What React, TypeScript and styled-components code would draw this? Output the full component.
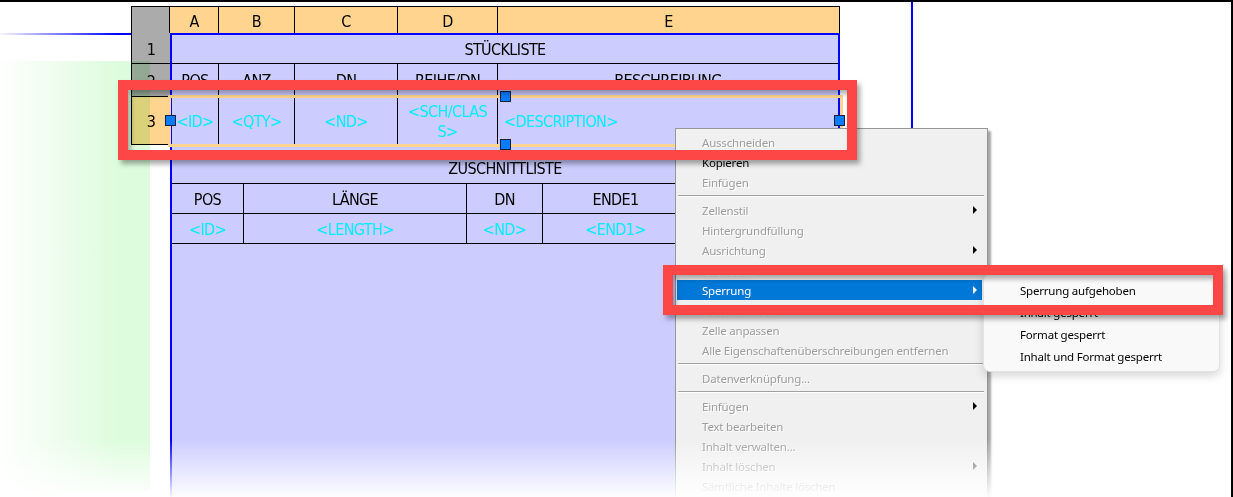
import React from "react";
import styled, { createGlobalStyle } from "styled-components";

const GlobalStyle = createGlobalStyle`
  html, body { margin: 0; padding: 0; background: #fff; }
  body { font-family: "Noto Sans", "DejaVu Sans", sans-serif; }
  *, *::before, *::after { box-sizing: border-box; }
`;

const LAVENDER = "#ccccff";
const ORANGE = "#fed48e";
const HEADER_GRAY = "#ababab";
const CAD_BLUE = "#0000ff";
const CYAN = "#00eeff";
const MARKUP_RED = "#fd4646";

const Screen = styled.div`
  position: relative;
  width: 1233px;
  height: 497px;
  overflow: hidden;
  background: #fff;
  border-top: 2px solid #000;
  border-right: 2px solid #000;
  display: flex;
`;

const ViewMargin = styled.div`
  width: 131px;
  flex: none;
  padding-top: 4px;
`;

const ViewEdge = styled.div`
  height: 29px;
  border-bottom: 2px solid ${CAD_BLUE};
`;

const Sheet = styled.div`
  width: 709px;
  flex: none;
  margin-top: 4px;
  display: flex;
  flex-direction: column;
  font-family: "DejaVu Sans Condensed", "DejaVu Sans", sans-serif;
  font-size: 16px;
  letter-spacing: -0.6px;
  color: #000;
`;

const ColumnHeaderRow = styled.div`
  display: grid;
  grid-template-columns: 39px 49px 76px 103px 100px 342px;
  height: 27px;
  flex: none;
`;

const ColumnHeader = styled.div<{ $corner?: boolean }>`
  background: ${({ $corner }) => ($corner ? HEADER_GRAY : ORANGE)};
  border-top: 1px solid #000;
  border-right: 1px solid #000;
  border-left: ${({ $corner }) => ($corner ? "1px solid #000" : "none")};
  display: flex;
  align-items: center;
  justify-content: center;
  padding-top: 3px;
`;

const SheetBody = styled.div`
  flex: 1;
  display: flex;
`;

const RowHeaderColumn = styled.div`
  width: 39px;
  flex: none;
  display: flex;
  flex-direction: column;
`;

const RowHeader = styled.div<{ $h: number; $selected?: boolean }>`
  height: ${({ $h }) => $h}px;
  flex: none;
  background: ${({ $selected }) => ($selected ? ORANGE : HEADER_GRAY)};
  border-left: 1px solid #000;
  border-bottom: 1px solid #000;
  display: flex;
  align-items: center;
  justify-content: center;
  padding-top: 2px;
`;

const DataArea = styled.div`
  width: 670px;
  flex: none;
  display: flex;
  flex-direction: column;
  background: ${LAVENDER};
  border: 2px solid ${CAD_BLUE};
  border-bottom: none;
`;

const BomGrid = styled.div`
  display: grid;
  grid-template-columns: 47px 76px 103px 100px 340px;
  grid-template-rows: 29px 33px 48px;
`;

const CutGrid = styled.div`
  display: grid;
  grid-template-columns: 72px 223px 76px 146px 149px;
  grid-template-rows: 31px 30px 30px;
  margin-top: 8px;
`;

const Cell = styled.div<{ $title?: boolean; $last?: boolean; $field?: boolean; $left?: boolean }>`
  grid-column: ${({ $title }) => ($title ? "1 / -1" : "auto")};
  border-bottom: 1px solid #000;
  border-right: ${({ $last, $title }) => ($last || $title ? "none" : "1px solid #000")};
  display: flex;
  align-items: center;
  justify-content: ${({ $left }) => ($left ? "flex-start" : "center")};
  padding: ${({ $left }) => ($left ? "2px 0 0 6px" : "2px 0 0")};
  color: ${({ $field }) => ($field ? CYAN : "#000")};
  text-align: center;
  line-height: 20px;
  white-space: nowrap;
`;

const ViewGap = styled.div`
  width: 71px;
  flex: none;
`;

const ViewportEdge = styled.div`
  width: 2px;
  flex: none;
  background: ${CAD_BLUE};
`;

const Workspace = styled.div`
  flex: 1;
`;

/* overlays */

const GreenPanel = styled.div`
  position: absolute;
  left: 0;
  top: 59px;
  width: 150px;
  height: 430px;
  background: #ddfcdd;
  mix-blend-mode: multiply;
`;

const SelectionFrame = styled.div`
  position: absolute;
  left: 168px;
  top: 93px;
  width: 675px;
  height: 52px;
  border: 3px solid ${ORANGE};
`;

const Grip = styled.div<{ $x: number; $y: number }>`
  position: absolute;
  left: ${({ $x }) => $x - 5}px;
  top: ${({ $y }) => $y - 7}px;
  width: 11px;
  height: 11px;
  background: #0a7cff;
  border: 1px solid #1c2040;
`;

const ContextMenu = styled.div`
  position: absolute;
  left: 675px;
  top: 126px;
  width: 313px;
  height: 390px;
  background: #f0f0f0;
  border: 1px solid #979797;
  padding: 3px 5px 0 1px;
  box-shadow: 3px 3px 2px rgba(0, 0, 0, 0.35);
  font-family: "Noto Sans", "Open Sans", sans-serif;
  font-size: 11.5px;
  letter-spacing: -0.2px;
`;

const MenuItem = styled.div<{ $disabled?: boolean; $active?: boolean }>`
  position: relative;
  height: 20px;
  display: flex;
  align-items: center;
  padding-left: 25px;
  background: ${({ $active }) => ($active ? "#0078d7" : "transparent")};
  color: ${({ $active, $disabled }) => ($active ? "#fff" : $disabled ? "#9d9d9d" : "#000")};
  text-shadow: ${({ $disabled }) => ($disabled ? "1px 1px 0 #ffffff" : "none")};
`;

const SubArrow = styled.span<{ $light?: boolean; $dim?: boolean }>`
  position: absolute;
  right: 5px;
  top: 6px;
  width: 0;
  height: 0;
  border-top: 4px solid transparent;
  border-bottom: 4px solid transparent;
  border-left: 4px solid ${({ $light, $dim }) => ($light ? "#fff" : $dim ? "#6a6a6a" : "#000")};
`;

const MenuSeparator = styled.div`
  height: 8px;
  display: flex;
  align-items: center;
  &::before {
    content: "";
    flex: 1;
    margin: 0 -2px 0 1px;
    border-top: 1px solid #a0a0a0;
    border-bottom: 1px solid #ffffff;
  }
`;

const SubMenu = styled.div`
  position: absolute;
  left: 983px;
  top: 271px;
  width: 237px;
  padding: 5px 0 4px;
  background: #f9f9f9;
  border: 1px solid #e3e3e3;
  border-radius: 7px;
  box-shadow: 0 4px 10px rgba(0, 0, 0, 0.16);
  font-family: "Noto Sans", "Open Sans", sans-serif;
  font-size: 11.5px;
  letter-spacing: -0.2px;
  color: #000;
`;

const SubMenuItem = styled.div`
  height: 22px;
  display: flex;
  align-items: center;
  padding-left: 36px;
`;

const Markup = styled.div<{ $x: number; $y: number; $w: number; $h: number }>`
  position: absolute;
  left: ${({ $x }) => $x}px;
  top: ${({ $y }) => $y}px;
  width: ${({ $w }) => $w}px;
  height: ${({ $h }) => $h}px;
  border: 10px solid ${MARKUP_RED};
  box-shadow: 3px 4px 5px rgba(0, 0, 0, 0.35), inset 3px 4px 5px rgba(0, 0, 0, 0.3);
`;

const LeftFade = styled.div`
  position: absolute;
  left: 0;
  top: 0;
  bottom: 0;
  width: 118px;
  background: linear-gradient(90deg, rgba(255, 255, 255, 0.97), rgba(255, 255, 255, 0));
  pointer-events: none;
`;

const BottomFade = styled.div`
  position: absolute;
  left: 0;
  right: 0;
  bottom: 0;
  height: 58px;
  background: linear-gradient(180deg, rgba(255, 255, 255, 0), rgba(255, 255, 255, 0.97));
  pointer-events: none;
`;

const bomHeads = ["POS", "ANZ", "DN", "REIHE/DN", "BESCHREIBUNG"];
const cutHeads = ["POS", "LÄNGE", "DN", "ENDE1", ""];
const cutFields = ["<ID>", "<LENGTH>", "<ND>", "<END1>", ""];

type Entry = { label: string; disabled?: boolean; sub?: boolean; active?: boolean } | "sep";

const menuEntries: Entry[] = [
  { label: "Ausschneiden", disabled: true },
  { label: "Kopieren" },
  { label: "Einfügen", disabled: true },
  "sep",
  { label: "Zellenstil", disabled: true, sub: true },
  { label: "Hintergrundfüllung", disabled: true },
  { label: "Ausrichtung", disabled: true, sub: true },
  { label: "Grenzen...", disabled: true },
  { label: "Sperrung", sub: true, active: true },
  { label: "Datenformat...", disabled: true },
  { label: "Zelle anpassen", disabled: true },
  { label: "Alle Eigenschaftenüberschreibungen entfernen", disabled: true },
  "sep",
  { label: "Datenverknüpfung...", disabled: true },
  "sep",
  { label: "Einfügen", disabled: true, sub: true },
  { label: "Text bearbeiten", disabled: true },
  { label: "Inhalt verwalten...", disabled: true },
  { label: "Inhalt löschen", disabled: true, sub: true },
  { label: "Sämtliche Inhalte löschen", disabled: true },
];

const lockModes = ["Sperrung aufgehoben", "Inhalt gesperrt", "Format gesperrt", "Inhalt und Format gesperrt"];

export default function App() {
  return (
    <>
      <GlobalStyle />
      <Screen>
        <ViewMargin>
          <ViewEdge />
        </ViewMargin>

        <Sheet>
          <ColumnHeaderRow>
            <ColumnHeader $corner />
            {["A", "B", "C", "D", "E"].map((c) => (
              <ColumnHeader key={c}>{c}</ColumnHeader>
            ))}
          </ColumnHeaderRow>

          <SheetBody>
            <RowHeaderColumn>
              <RowHeader $h={31}>1</RowHeader>
              <RowHeader $h={33}>2</RowHeader>
              <RowHeader $h={48} $selected>
                3
              </RowHeader>
            </RowHeaderColumn>

            <DataArea>
              <BomGrid>
                <Cell $title>STÜCKLISTE</Cell>
                {bomHeads.map((h, i) => (
                  <Cell key={h} $last={i === bomHeads.length - 1}>
                    {h}
                  </Cell>
                ))}
                <Cell $field>{"<ID>"}</Cell>
                <Cell $field>{"<QTY>"}</Cell>
                <Cell $field>{"<ND>"}</Cell>
                <Cell $field>
                  {"<SCH/CLAS"}
                  <br />
                  {"S>"}
                </Cell>
                <Cell $field $left $last>
                  {"<DESCRIPTION>"}
                </Cell>
              </BomGrid>

              <CutGrid>
                <Cell $title>ZUSCHNITTLISTE</Cell>
                {cutHeads.map((h, i) => (
                  <Cell key={`h${i}`} $last={i === cutHeads.length - 1}>
                    {h}
                  </Cell>
                ))}
                {cutFields.map((f, i) => (
                  <Cell key={`f${i}`} $field $last={i === cutFields.length - 1}>
                    {f}
                  </Cell>
                ))}
              </CutGrid>
            </DataArea>
          </SheetBody>
        </Sheet>

        <ViewGap />
        <ViewportEdge />
        <Workspace />

        <GreenPanel />
        <SelectionFrame />
        <Grip $x={170} $y={120} />
        <Grip $x={505} $y={96} />
        <Grip $x={505} $y={144} />
        <Grip $x={839} $y={120} />

        <ContextMenu>
          {menuEntries.map((e, i) =>
            e === "sep" ? (
              <MenuSeparator key={i} />
            ) : (
              <MenuItem key={i} $disabled={e.disabled} $active={e.active}>
                {e.label}
                {e.sub && <SubArrow $light={e.active} $dim={e.label === "Inhalt löschen"} />}
              </MenuItem>
            )
          )}
        </ContextMenu>

        <SubMenu>
          {lockModes.map((m) => (
            <SubMenuItem key={m}>{m}</SubMenuItem>
          ))}
        </SubMenu>

        <Markup $x={118} $y={78} $w={739} $h={80} />
        <Markup $x={663} $y={263} $w={560} $h={50} />

        <LeftFade />
        <BottomFade />
      </Screen>
    </>
  );
}
